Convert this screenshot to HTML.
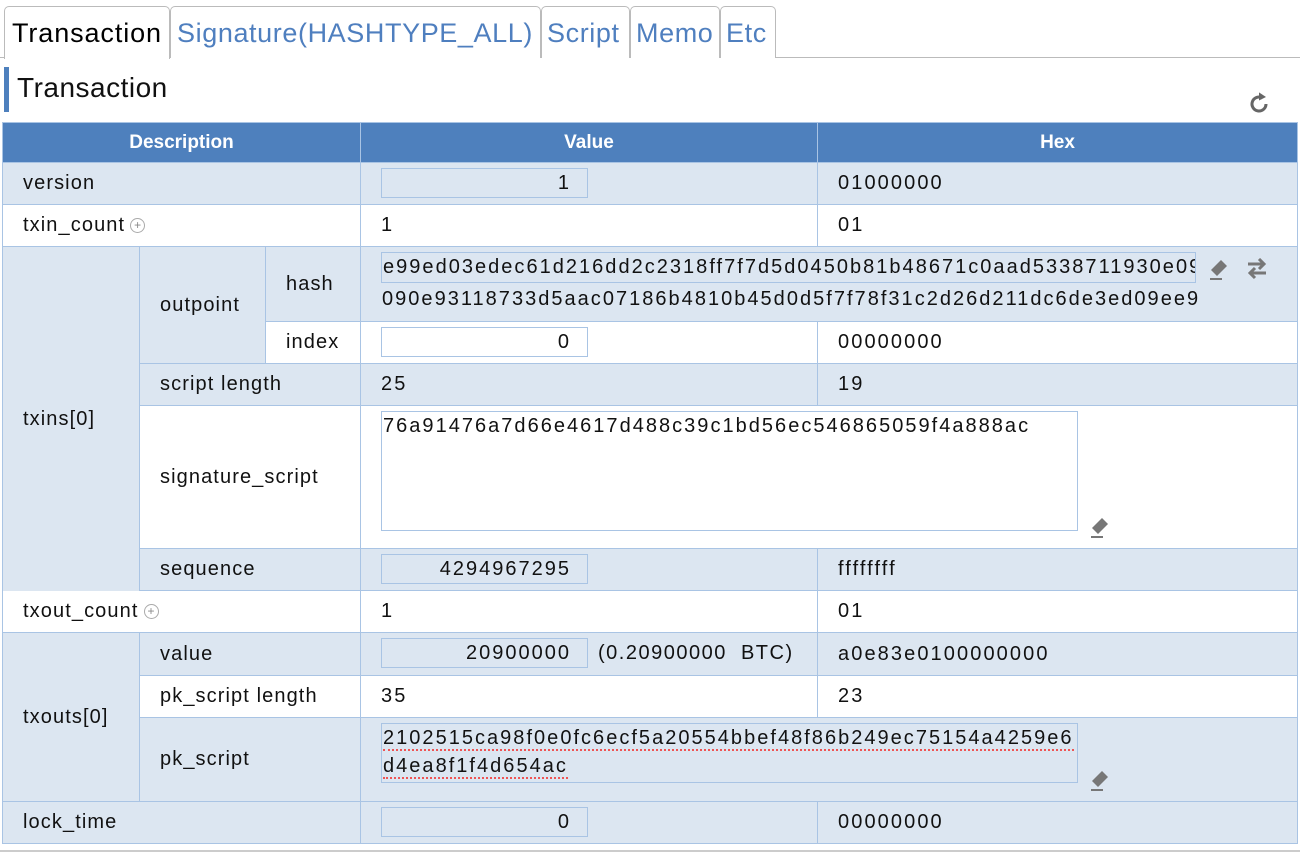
<!DOCTYPE html>
<html><head><meta charset="utf-8"><style>
body{margin:0;width:1300px;height:859px;background:#fff;font-family:"Liberation Sans",sans-serif;color:#111;position:relative;overflow:hidden}
.a{position:absolute;box-sizing:border-box}
.c{position:absolute;box-sizing:border-box;font-size:20px;letter-spacing:1.1px;display:flex;align-items:center;padding-left:20px;white-space:nowrap}
.x{letter-spacing:2.1px}
.b{background:#dce6f1}.w{background:#fff}
.h{background:#4e80bd;color:#fff;font-weight:bold;justify-content:center;padding:0;font-size:19px;letter-spacing:0}
.in{position:absolute;box-sizing:border-box;height:30px;width:207px;border:1px solid #a9c4e4;text-align:right;padding-right:16px;font-size:20px;line-height:28px;letter-spacing:2px}
.tab{position:absolute;top:6px;height:52px;box-sizing:border-box;border:1px solid #bbb;border-bottom:none;border-radius:5px 5px 0 0;font-size:27px;line-height:52px;padding:0 4px;color:#4f7fbf;background:#fff;letter-spacing:0.6px;white-space:nowrap;overflow:hidden}
.hx{font-size:20px;letter-spacing:2.02px;white-space:nowrap}
</style></head><body>
<div class="a" style="left:0;top:57px;width:1300px;height:1px;background:#bbb"></div>
<div class="tab" style="left:4px;width:166px;color:#000;height:53px;padding-left:7px;letter-spacing:0.9px">Transaction</div>
<div class="tab" style="left:170px;width:371px;padding-left:6px;letter-spacing:0.6px">Signature(HASHTYPE_ALL)</div>
<div class="tab" style="left:541px;width:89px;padding-left:5px">Script</div>
<div class="tab" style="left:630px;width:90px;padding-left:5px">Memo</div>
<div class="tab" style="left:720px;width:56px;padding-left:5px">Etc</div>
<div class="a" style="left:4px;top:67px;width:5px;height:45px;background:#4e80bd"></div>
<div class="a" style="left:17px;top:72px;font-size:28px;letter-spacing:0.5px">Transaction</div>
<svg class="a" style="left:1245px;top:90px" width="28" height="28" viewBox="0 0 24 24"><path d="M18 12a6 6 0 1 1-3-5.2" fill="none" stroke="#666" stroke-width="2.6"/><path d="M12 2l6 4-6 3z" fill="#666"/></svg>
<div class="a" style="left:2px;top:122px;width:1296px;height:722px;background:#a9c4e4"></div>
<div class="a" style="left:0;top:850px;width:1300px;height:2px;background:#ccc"></div>
<div id="t"></div>
<script>
var P='<span style="display:inline-block;width:13px;height:13px;border:1px solid #aaa;border-radius:50%;font-size:12px;line-height:13px;text-align:center;color:#888;margin-left:5px;letter-spacing:0">+</span>';
var cells=[
[2,122,358,40,'h','Description'],[360,122,457,40,'h','Value'],[817,122,480,40,'h','Hex'],
[2,162,358,42,'b','version'],[360,162,457,42,'b',''],[817,162,480,42,'b x','01000000'],
[2,204,358,42,'w','txin_count '+P],[360,204,457,42,'w x','1'],[817,204,480,42,'w x','01'],
[2,246,137,345,'b','txins[0]'],[139,246,126,117,'b','outpoint'],[265,246,95,75,'b','hash'],[360,246,937,75,'b',''],
[265,321,95,42,'w','index'],[360,321,457,42,'w',''],[817,321,480,42,'w x','00000000'],
[139,363,221,42,'b','script length'],[360,363,457,42,'b x','25'],[817,363,480,42,'b x','19'],
[139,405,221,143,'w','signature_script'],[360,405,937,143,'w',''],
[139,548,221,42,'b','sequence'],[360,548,457,42,'b',''],[817,548,480,42,'b x','ffffffff'],
[2,590,358,42,'w','txout_count'+P],[360,590,457,42,'w x','1'],[817,590,480,42,'w x','01'],
[2,632,137,169,'b','txouts[0]'],[139,632,221,43,'b','value'],[360,632,457,43,'b',''],[817,632,480,43,'b x','a0e83e0100000000'],
[139,675,221,42,'w','pk_script length'],[360,675,457,42,'w x','35'],[817,675,480,42,'w x','23'],
[139,717,221,84,'b','pk_script'],[360,717,937,84,'b',''],
[2,801,358,42,'b','lock_time'],[360,801,457,42,'b',''],[817,801,480,42,'b x','00000000']];
var h='';cells.forEach(function(c){var x=c[0]+1,y=c[1]+1,w=c[2]-1,hh=c[3]-1;
h+='<div class="c '+c[4]+'" style="left:'+x+'px;top:'+y+'px;width:'+w+'px;height:'+hh+'px">'+c[5]+'</div>';});
document.getElementById('t').innerHTML=h;
</script>
<div class="in" style="left:381px;top:168px;background:#dce6f1">1</div>
<div class="in" style="left:381px;top:327px;background:#fff">0</div>
<div class="in" style="left:381px;top:554px;background:#dce6f1">4294967295</div>
<div class="in" style="left:381px;top:638px;background:#dce6f1">20900000</div>
<div class="a" style="left:598px;top:642px;font-size:20px;letter-spacing:1.5px">(0.20900000&nbsp; BTC)</div>
<div class="in" style="left:381px;top:807px;background:#dce6f1">0</div>
<div class="a hx" style="left:381px;top:252px;width:815px;height:31px;border:1px solid #a9c4e4;overflow:hidden;line-height:29px;padding-left:1px">e99ed03edec61d216dd2c2318ff7f7d5d0450b81b48671c0aad5338711930e09</div>
<div class="a hx" style="left:382px;top:288px">090e93118733d5aac07186b4810b45d0d5f7f78f31c2d26d211dc6de3ed09ee9</div>
<div class="a hx" style="left:381px;top:411px;width:697px;height:120px;border:1px solid #a9c4e4;padding:3px 1px">76a91476a7d66e4617d488c39c1bd56ec546865059f4a888ac</div>
<div class="a hx" style="left:381px;top:723px;width:697px;height:60px;border:1px solid #a9c4e4;padding:0 1px;line-height:28px;overflow:hidden"><span style="border-bottom:2px dotted #e55">2102515ca98f0e0fc6ecf5a20554bbef48f86b249ec75154a4259e6</span><br><span style="border-bottom:2px dotted #e55">d4ea8f1f4d654ac</span></div>
<svg class="a" style="left:1207px;top:256px" width="24" height="26" viewBox="0 0 24 26"><path d="M4 14L14 4l6 6-10 10z" fill="#777"/><path d="M3 23h12" stroke="#777" stroke-width="2"/></svg>
<svg class="a" style="left:1245px;top:258px" width="24" height="22" viewBox="0 0 24 22"><path d="M3 6h16M14 1l5 5-5 5M21 15H5M10 10l-5 5 5 5" fill="none" stroke="#777" stroke-width="3"/></svg>
<svg class="a" style="left:1088px;top:514px" width="24" height="26" viewBox="0 0 24 26"><path d="M4 14L14 4l6 6-10 10z" fill="#777"/><path d="M3 23h12" stroke="#777" stroke-width="2"/></svg>
<svg class="a" style="left:1088px;top:767px" width="24" height="26" viewBox="0 0 24 26"><path d="M4 14L14 4l6 6-10 10z" fill="#777"/><path d="M3 23h12" stroke="#777" stroke-width="2"/></svg>
</body></html>
